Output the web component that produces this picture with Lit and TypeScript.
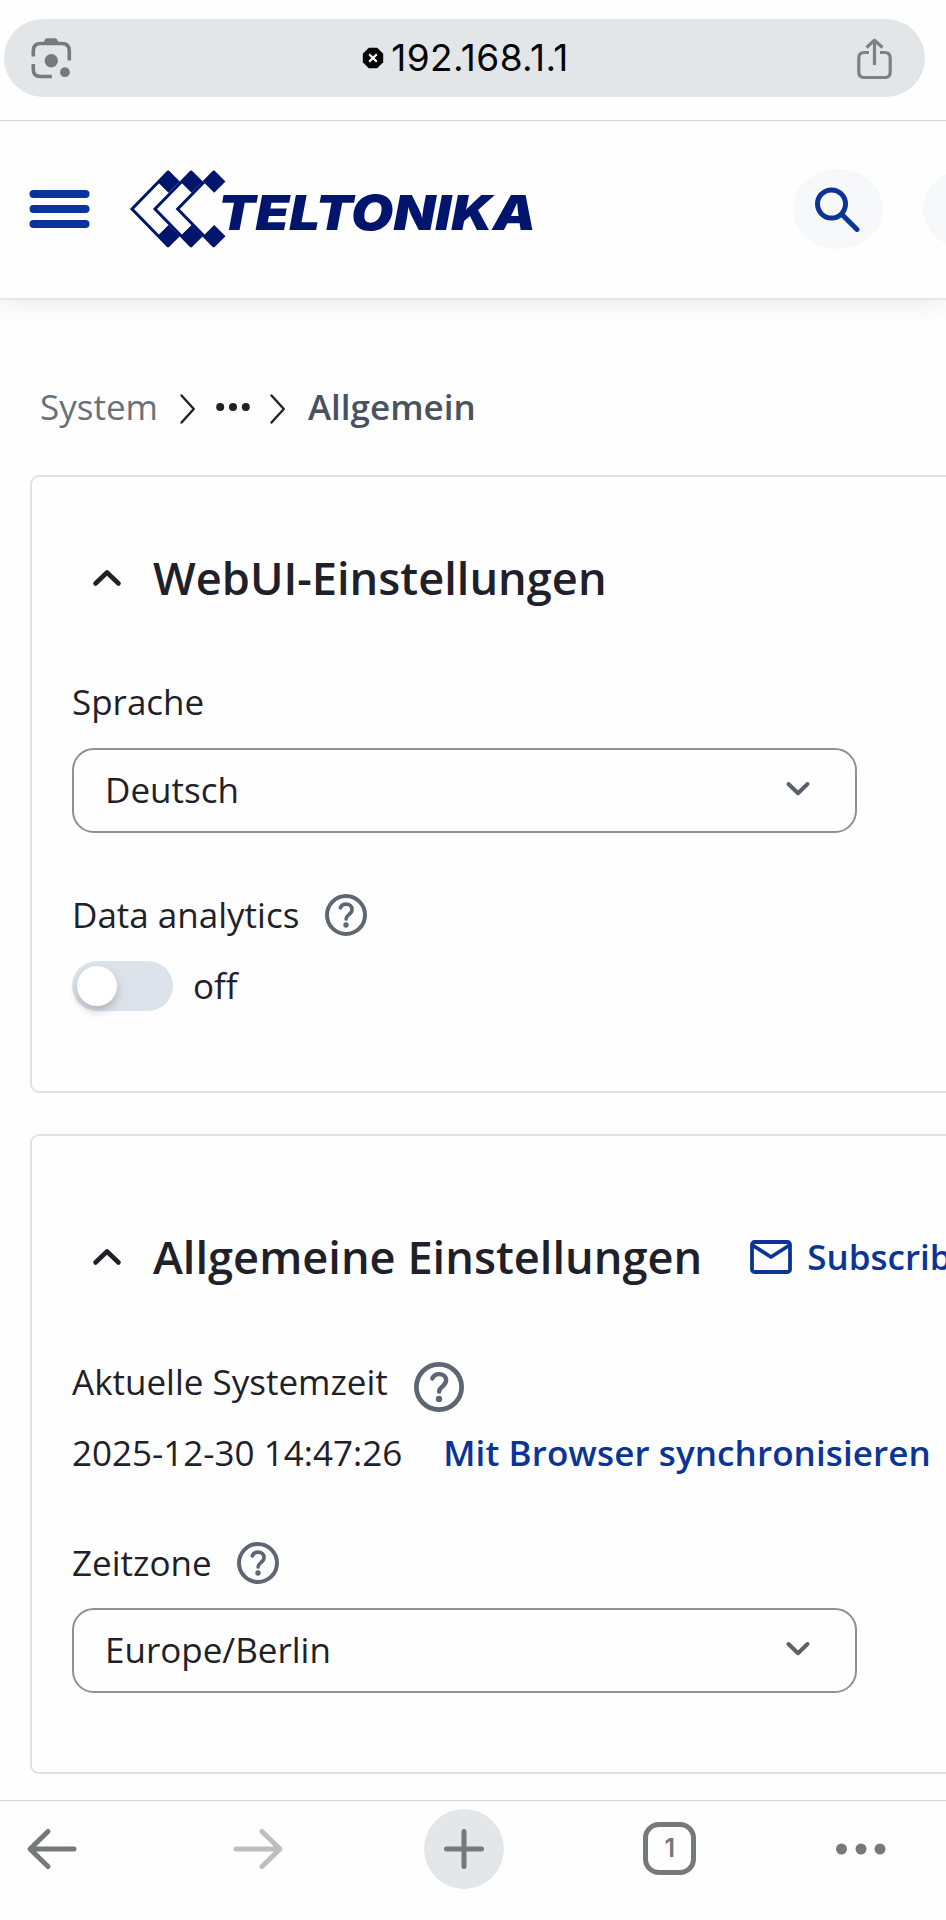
import { LitElement, html, css, svg } from "lit";
import { customElement, property } from "lit/decorators.js";

const chevronUp = html`<svg class="chev-up" width="30" height="20" viewBox="0 0 30 20" fill="none" stroke="#1e2129" stroke-width="4.6" stroke-linecap="round" stroke-linejoin="round"><path d="M3.5 15.5 15 4.5 26.5 15.5"/></svg>`;

const crumbArrow = html`<svg class="arrow" width="18" height="32" viewBox="0 0 18 32" fill="none" stroke="#1e2129" stroke-width="2.4" stroke-linecap="round" stroke-linejoin="round"><path d="M2.500 2.500 14.800 16 2.500 29.500"/></svg>`;

@customElement("help-icon")
export class HelpIcon extends LitElement {
  @property({ type: Number }) size = 42;
  static styles = css`
    :host { display: block; flex: none; }
    svg { display: block; }
  `;
  render() {
    return html`<svg width=${this.size} height=${this.size} viewBox="0 0 42 42" fill="none" stroke="#5d6671" stroke-linecap="round" stroke-linejoin="round">
      <circle cx="21" cy="21" r="19" stroke-width="4"/>
      <path d="M15.400 13.800C16.400 11.300 18.400 10.200 21 10.200c3.600 0 6 2.100 6 5.200 0 2.500-1.400 3.800-3.100 5.200-1.800 1.400-2.800 2.300-2.800 4.300" stroke-width="3.700"/>
      <circle cx="21" cy="31" r="2.700" fill="#5d6671" stroke="none"/>
    </svg>`;
  }
}

@customElement("select-box")
export class SelectBox extends LitElement {
  @property() value = "";
  static styles = css`
    :host {
      display: flex; align-items: center; justify-content: space-between;
      box-sizing: border-box; width: 785px; height: 85.5px;
      border: 2px solid #8b909a; border-radius: 22px;
      padding: 0 43.500px 1px 31px;
    }
    svg { display: block; margin-bottom: 1.500px; }
  `;
  render() {
    return html`<span>${this.value}</span>
      <svg width="28" height="18" viewBox="0 0 28 18" fill="none" stroke="#59616d" stroke-width="4" stroke-linecap="round" stroke-linejoin="round"><path d="M4.500 4 14 13.200 23.500 4"/></svg>`;
  }
}

@customElement("app-root")
export class AppRoot extends LitElement {
  static styles = css`
    :host {
      display: flex; flex-direction: column; width: 946px; height: 1920px;
      overflow: hidden; background: #fefefe; color: #1e2129;
      font: 400 35px/50px "Open Sans", sans-serif;
    }
    * { box-sizing: border-box; }
    svg { display: block; flex: none; }
    .browser { flex: none; height: 121px; padding: 19.300px 21px 0 4px; border-bottom: 1px solid #d3d6d8; }
    .url {
      height: 78px; border-radius: 39px; background: #e3e6e9; color: #050505;
      display: flex; align-items: center; justify-content: space-between; padding: 0 32px 0 26px;
    }
    .host { display: flex; align-items: center; gap: 7px; padding-bottom: 1px; margin-left: 3px; }
    .addr { font: 400 37px/50px Inter, sans-serif; letter-spacing: 0.400px; }
    .header {
      flex: none; height: 179px; display: flex; align-items: center;
      padding: 0 0 1px 29px; border-bottom: 2px solid #e2e8e9;
      box-shadow: 0 4px 24px rgba(30, 50, 60, .09); clip-path: inset(0 0 -48px 0);
    }
    .logo { margin-left: 39px; }
    .brand { font: italic 900 48.500px Inter, "Open Sans", sans-serif; fill: #00156b; }
    .round { flex: none; width: 90px; height: 80px; border-radius: 45px / 40px; background: #f6f8fa; display: flex; align-items: center; justify-content: center; }
    .search { margin-left: 258px; }
    .user { margin-left: 40px; }
    .crumbs { flex: none; height: 50px; margin-top: 82.400px; padding-left: 40px; display: flex; align-items: center; color: #4a525e; }
    .arrow { margin-top: 4px; }
    .crumbs .first { color: #6a7079; margin-right: 21px; }
    .crumbs .last { font-weight: 600; margin-left: 21px; }
    .dots { margin: 0 19px; }
    .card {
      flex: none; margin: 0 -20px 0 30px; border: 2px solid #dfe1e4; border-radius: 9px;
      padding: 71px 0 0 40px; height: 618.500px;
    }
    .one { margin-top: 42.600px; }
    .two { margin-top: 40.500px; padding-top: 91px; height: 640px; }
    .title { display: flex; align-items: center; height: 60px; padding-left: 20px; white-space: nowrap; }
    .title h2 { margin: 0 0 0 31px; font-size: 45.200px; line-height: 60px; font-weight: 600; }
    .link { color: #0a3596; font-weight: 600; white-space: nowrap; }
    .mail { margin: 0 15px 0 48px; }
    .row { display: flex; align-items: center; height: 50px; white-space: nowrap; }
    .label1 { margin: 69.400px 0 20.600px; }
    .label2 { margin: 57px 0 20.600px; }
    .label3 { margin: 70.400px 0 20.600px; }
    .label4 { margin: 60.400px 0 19.600px; }
    .help { margin-left: 25.500px; }
    .low { margin: 9px 0 0 26px; }
    .toggle { width: 101px; height: 50px; border-radius: 25px; background: #dce2ea; padding: 5px; margin-right: 20px; }
    .knob { width: 40px; height: 40px; border-radius: 50%; background: #fff; box-shadow: 0 5px 10px rgba(0, 0, 0, .2); }
    .sync { margin-left: 41px; letter-spacing: 0.100px; }
    .bottom { flex: none; margin-top: 26px; height: 120px; border-top: 1px solid #d3d6d8; padding: 8px 59px 0 25.500px; display: flex; align-items: flex-start; }
    .bottom > * { height: 80px; display: flex; align-items: center; flex: none; }
    .forward { margin: 0 140.500px 0 154px; }
    .plus { width: 80px; border-radius: 50%; background: #e4e7e9; justify-content: center; }
    .bottom > .tab { width: 53px; height: 53px; margin: 13.500px 138.800px 0 139.200px; border: 5px solid #757979; border-radius: 16px; justify-content: center; font: 600 25px/43px Inter, sans-serif; color: #757979; }
  `;

  private logo() {
    const xs = [168.5, 191.5, 214.2];
    return html`<svg class="logo" width="406" height="84" viewBox="129 167 406 84">
      ${xs.map((x) => svg`<g fill="#00156b">
        <path d="M${x} 170.200l11.300 11.300-11.300 11.300-11.300-11.300z M${x} 225l11.300 11.300-11.300 11.300-11.300-11.300z"/>
        <path d="M${x} 171.500 L${x - 36.5} 209 L${x} 246.500" fill="none" stroke="#00156b" stroke-width="3"/>
      </g>`)}
      <text class="brand" x="218" y="229.500" textLength="318" lengthAdjust="spacingAndGlyphs">TELTONIKA</text>
    </svg>`;
  }

  render() {
    return html`
      <div class="browser"><div class="url">
        <svg width="42" height="42" viewBox="0 0 42 42" fill="none" stroke="#757a7b" stroke-width="3.600" stroke-linecap="butt">
          <path d="M3.300 19.500V14q0-7.500 7.500-7.500h21q7.500 0 7.500 7.500v9.500M3.300 27v5.500q0 7 7 7h11.500"/>
          <path d="M12.500 7.500l2.800-5.200q.6-1 1.800-1h8q1.200 0 1.800 1l2.800 5.200z" fill="#757a7b" stroke="none"/>
          <circle cx="21.300" cy="23.700" r="6.700" fill="#757a7b" stroke="none"/><circle cx="34.900" cy="35.200" r="4.900" fill="#757a7b" stroke="none"/>
        </svg>
        <div class="host">
          <svg width="22" height="22" viewBox="0 0 22 22"><path d="M6.800.8h8.400l6 6v8.400l-6 6H6.800l-6-6V6.800z" fill="#050505"/><path d="M7.200 7.200l7.600 7.600M14.800 7.200l-7.600 7.600" stroke="#fff" stroke-width="2.200"/></svg>
          <span class="addr">192.168.1.1</span>
        </div>
        <svg width="37" height="42" viewBox="0 0 37 42" fill="none" stroke="#7d8182" stroke-width="3.200" stroke-linecap="butt" stroke-linejoin="round">
          <path d="M13 15.500H8.300q-5.500 0-5.500 5.500v14q0 5.500 5.500 5.500h20.400q5.500 0 5.500-5.500V21q0-5.500-5.500-5.500H24M18.500 28V4M10.500 10.500l8-7.200 8 7.200"/>
        </svg>
      </div></div>

      <div class="header">
        <svg width="61" height="40" viewBox="0 0 61 40" fill="#0a349b"><rect x=".5" y="1" width="60" height="8" rx="4"/><rect x=".5" y="16" width="60" height="8" rx="4"/><rect x=".5" y="31" width="60" height="8" rx="4"/></svg>
        ${this.logo()}
        <div class="round search"><svg width="46" height="46" viewBox="0 0 46 46" fill="none" stroke="#0a3596" stroke-width="5" stroke-linecap="round"><circle cx="16.500" cy="18" r="14"/><path d="M27 28.500 42 43.500"/></svg></div>
        <div class="round user"></div>
      </div>

      <div class="crumbs">
        <span class="first">System</span>${crumbArrow}
        <svg class="dots" width="34" height="10" viewBox="0 0 34 10" fill="#1e2129"><circle cx="4.200" cy="5" r="4"/><circle cx="17" cy="5" r="4"/><circle cx="29.800" cy="5" r="4"/></svg>
        ${crumbArrow}<span class="last">Allgemein</span>
      </div>

      <section class="card one">
        <div class="title">${chevronUp}<h2>WebUI-Einstellungen</h2></div>
        <div class="row label1">Sprache</div>
        <select-box value="Deutsch"></select-box>
        <div class="row label2">Data analytics<help-icon class="help"></help-icon></div>
        <div class="row"><div class="toggle"><div class="knob"></div></div>off</div>
      </section>

      <section class="card two">
        <div class="title">${chevronUp}<h2>Allgemeine Einstellungen</h2>
          <svg class="mail" width="42" height="34" viewBox="0 0 42 34" fill="none" stroke="#0a3596" stroke-width="3.800" stroke-linejoin="round"><rect x="2" y="2" width="38" height="30" rx="2.500"/><path d="M3 5.500 21 17 39 5.500"/></svg>
          <span class="link">Subscribe</span>
        </div>
        <div class="row label3">Aktuelle Systemzeit<help-icon class="low" size="50"></help-icon></div>
        <div class="row">2025-12-30 14:47:26<span class="link sync">Mit Browser synchronisieren</span></div>
        <div class="row label4">Zeitzone<help-icon class="help"></help-icon></div>
        <select-box value="Europe/Berlin"></select-box>
      </section>

      <nav class="bottom">
        <div><svg width="52" height="44" viewBox="0 0 52 44" fill="none" stroke="#757979" stroke-width="5" stroke-linecap="round" stroke-linejoin="round"><path d="M48 22H5M22 4.500 4 22 22 39.500"/></svg></div>
        <div class="forward"><svg width="52" height="44" viewBox="0 0 52 44" fill="none" stroke="#bdbfbf" stroke-width="5" stroke-linecap="round" stroke-linejoin="round"><path d="M4 22H47M30 4.500 48 22 30 39.500"/></svg></div>
        <div class="plus"><svg width="40" height="40" viewBox="0 0 40 40" stroke="#757979" stroke-width="5" stroke-linecap="round"><path d="M2.500 20h35M20 2.500v35"/></svg></div>
        <div class="tab">1</div>
        <div><svg width="52" height="12" viewBox="0 0 52 12" fill="#757979"><circle cx="6.500" cy="6" r="5.500"/><circle cx="26" cy="6" r="5.500"/><circle cx="45" cy="6" r="5.500"/></svg></div>
      </nav>`;
  }
}
